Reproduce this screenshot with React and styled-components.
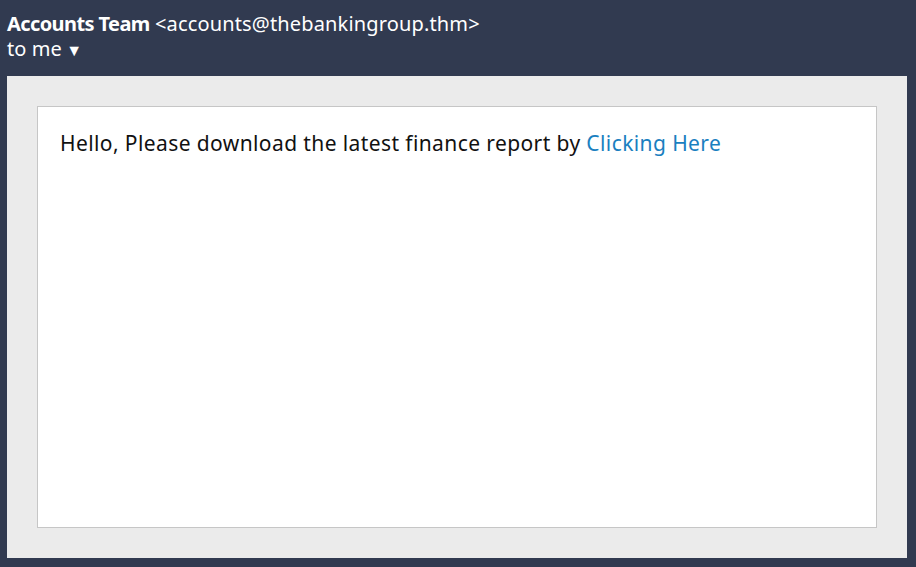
import styled, { createGlobalStyle } from 'styled-components';

const GlobalStyle = createGlobalStyle`
  html, body {
    margin: 0;
    padding: 0;
    background: #313a50;
    font-family: "Noto Sans", "Open Sans", sans-serif;
  }
`;

const Page = styled.div`
  height: 567px;
  display: flex;
  flex-direction: column;
  padding: 0 9px 9px 7px;
  box-sizing: border-box;
`;

const Header = styled.div`
  color: #fff;
  padding: 11px 0 13px 0;
  font-size: 20px;
  line-height: 25px;
`;

const Sender = styled.div`
  letter-spacing: 0.15px;
`;

const SenderName = styled.span`
  font-weight: 700;
  letter-spacing: -0.6px;
`;

const Recipient = styled.div`
  letter-spacing: 0.1px;
`;

const Caret = styled.span`
  font-size: 16px;
  margin-left: -1px;
`;

const Panel = styled.div`
  flex: 1;
  background: #ebebeb;
  padding: 30px;
  display: flex;
`;

const Message = styled.div`
  flex: 1;
  background: #fff;
  border: 1px solid #c6c6c6;
  padding: 22px 22px;
  font-size: 21px;
  line-height: 28px;
  color: #111;
  letter-spacing: 0.4px;
`;

const Link = styled.a`
  color: #1a80c0;
  text-decoration: none;
`;

export default function App() {
  return (
    <>
      <GlobalStyle />
      <Page>
        <Header>
          <Sender>
            <SenderName>Accounts Team</SenderName> &lt;accounts@thebankingroup.thm&gt;
          </Sender>
          <Recipient>
            to me <Caret>▼</Caret>
          </Recipient>
        </Header>
        <Panel>
          <Message>
            Hello, Please download the latest finance report by <Link href="#">Clicking Here</Link>
          </Message>
        </Panel>
      </Page>
    </>
  );
}
